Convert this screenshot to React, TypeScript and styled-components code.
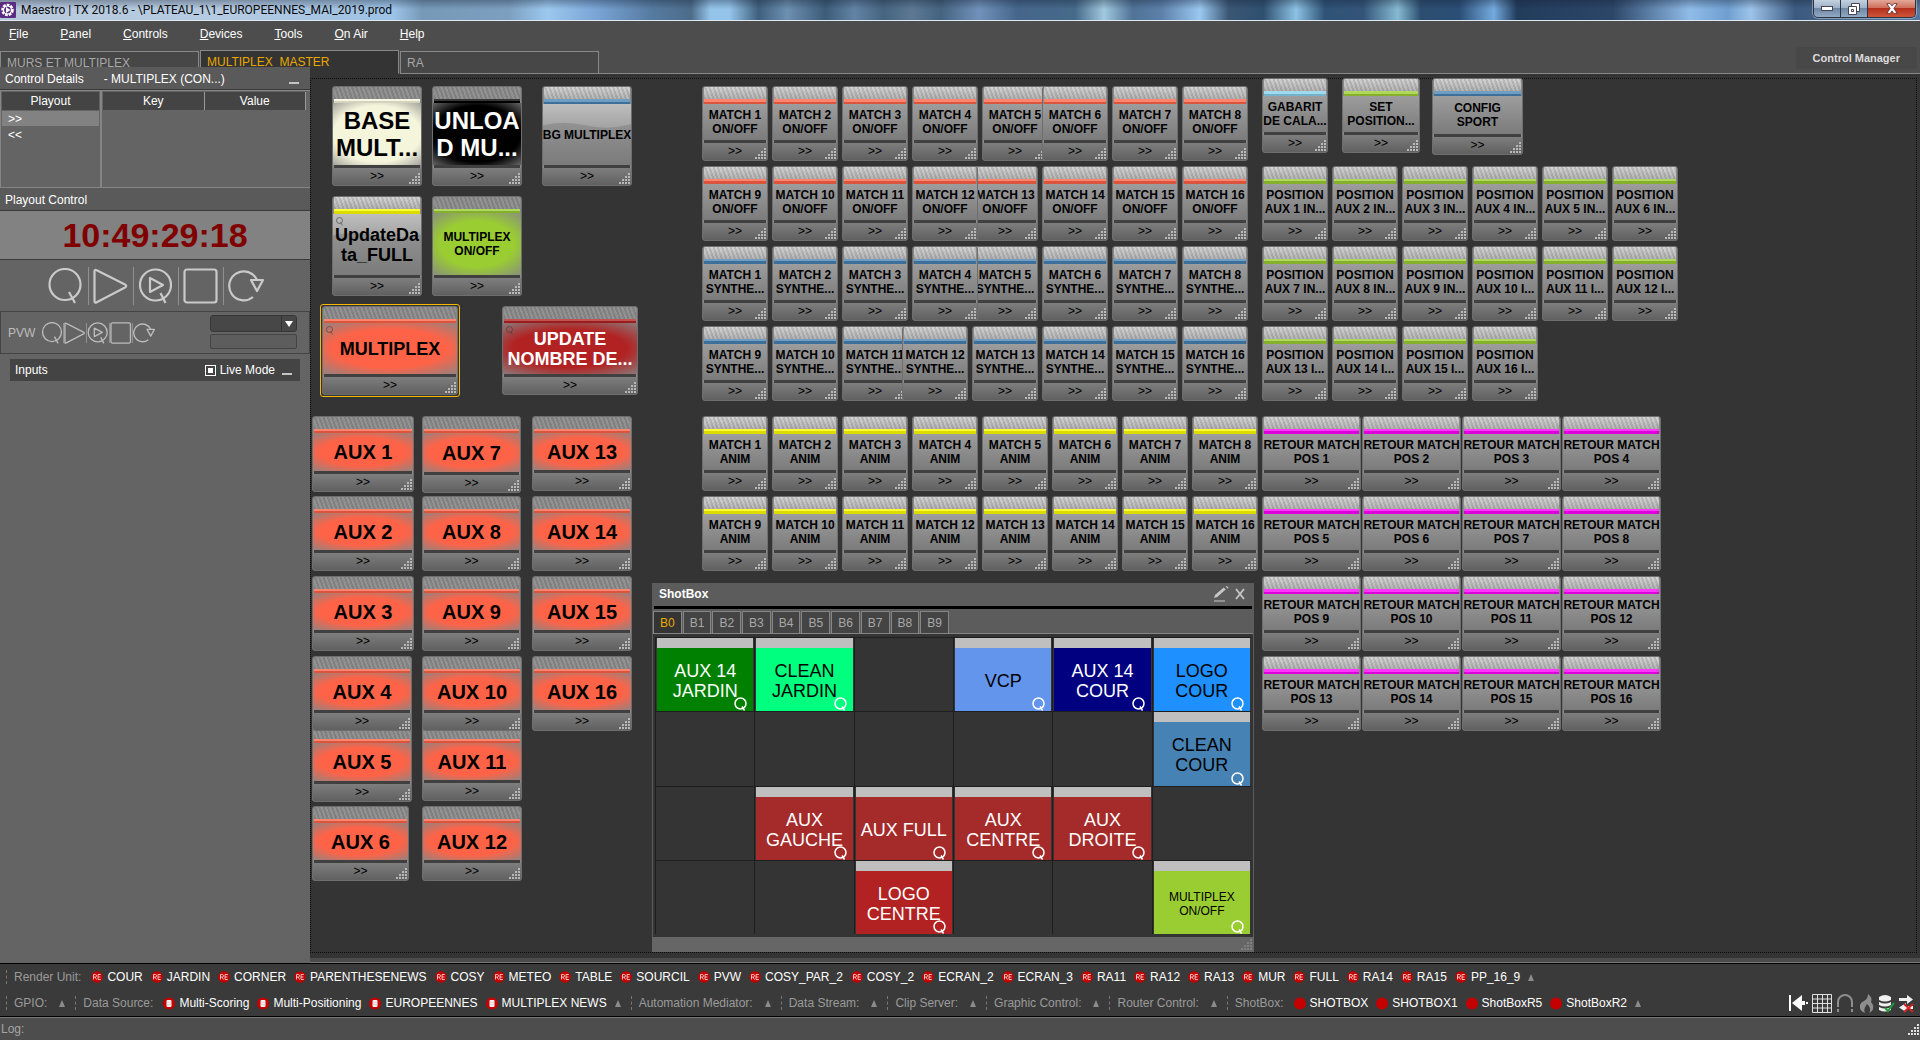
import React, { useState } from "react";
import styled, { createGlobalStyle } from "styled-components";

const GlobalStyle = createGlobalStyle`
  *, *::before, *::after { box-sizing: border-box; }
  html, body { margin: 0; padding: 0; background: #4d4d4d; }
  body, button, input, select, table {
    font-family: "Liberation Sans", Arial, sans-serif;
    font-size: 12px;
    line-height: 14px;
  }
  button { margin: 0; padding: 0; border: 0; background: none; color: inherit; cursor: pointer; }
`;

/* ---------- frame ---------- */

const Window = styled.div`
  display: flex;
  flex-direction: column;
  min-height: 100vh;
  background: #4d4d4d;
  color: #fff;
  overflow: hidden;
`;

const TitleBar = styled.header`
  display: flex;
  align-items: center;
  height: 21px;
  padding-right: 4px;
  border-bottom: 1px solid #dfe9f2;
  color: #0a0a0a;
  font: 12px/20px Roboto, "Open Sans", sans-serif;
  background:
    linear-gradient(to bottom, rgba(20, 30, 50, 0.35), rgba(255, 255, 255, 0) 45%),
    linear-gradient(to right,
      #b9c9dc 0, #b4cbe2 12%, #a3c3e2 18%, #9cc3e8 20.5%, #7799b8 22%, #7c9fbf 26.5%, #9cc8ee 28.5%,
      #7aa5d6 31%, #557a9f 34%, #4d6c8a 36%, #94c4ea 37%, #94c4ea 38%, #3f607d 39.5%, #6d8fb0 41%,
      #3c5c78 43%, #6383a5 44.5%, #45647f 46%, #5d7893 47.5%, #44637f 49%, #7191ba 51%, #45668a 53%,
      #466a8a 56%, #a0c8de 57.5%, #4f7296 59%, #5d80aa 60.5%, #9ac8f0 62.5%, #3a5674 64%, #2f5070 65.8%,
      #8cc2e4 67.5%, #2f5376 69%, #335478 71%, #86bad2 72.8%, #2c4e70 74%, #2b4e76 76%, #74aade 77.8%,
      #223c5c 79%, #2c4668 84%, #8fbbe8 88%, #6f9fd0 90%, #9dc3ea 91.2%, #3c5a80 93.5%, #56789e 100%);
`;

const AppTitle = styled.h1`
  flex: 1;
  margin: 0 0 0 5px;
  font: inherit;
`;

const CaptionButtons = styled.div`
  display: flex;
  align-self: flex-start;
  height: 18px;
  border: 1px solid #2a3443;
  border-top: 0;
  border-radius: 0 0 5px 5px;
  overflow: hidden;
  box-shadow: 0 0 0 1px rgba(255, 255, 255, 0.35);
`;

const CaptionButton = styled.button<{ $close?: boolean }>`
  display: flex;
  align-items: center;
  justify-content: center;
  width: ${(p) => (p.$close ? 47 : 27)}px;
  border-right: ${(p) => (p.$close ? "0" : "1px solid #2a3443")};
  background: ${(p) =>
    p.$close
      ? "linear-gradient(#e3a89a 0, #d06f5c 45%, #b5301c 50%, #d0543a 100%)"
      : "linear-gradient(#c3d0df 0, #9fb3c9 45%, #6f88a5 50%, #92a9c2 100%)"};
`;

const MenuBar = styled.nav`
  display: flex;
  align-items: center;
  gap: 32px;
  height: 26px;
  padding: 0 9px;
`;

const MenuButton = styled.button`
  color: #fff;
`;

const TabStrip = styled.div`
  display: flex;
  align-items: stretch;
  height: 27px;
`;

const Tabs = styled.div`
  display: flex;
  align-items: flex-end;
  gap: 1px;
`;

const Tab = styled.button<{ $active?: boolean }>`
  width: 199px;
  height: ${(p) => (p.$active ? 24 : 23)}px;
  padding: 0 6px;
  border: 1px solid #888;
  border-bottom-color: ${(p) => (p.$active ? "#343434" : "#888")};
  background: ${(p) => (p.$active ? "#343434" : "#474747")};
  color: ${(p) => (p.$active ? "#e9a800" : "#a8a8a8")};
  text-align: left;
`;

const StripRest = styled.div`
  flex: 1;
  display: flex;
  justify-content: flex-end;
  align-items: flex-start;
  padding-right: 3px;
  border-bottom: 1px solid #888;
`;

const ManagerButton = styled.button`
  height: 22px;
  padding: 0 17px;
  border-radius: 3px;
  background: #484848;
  color: #dcdcdc;
  font-size: 11px;
  font-weight: bold;
`;

const Main = styled.main`
  flex: 1;
  display: flex;
  background: #343434;
`;

/* ---------- sidebar ---------- */

/* The docked sidebar overlaps the lower edge of the tab strip. */
const Sidebar = styled.aside`
  position: relative;
  z-index: 2;
  flex: 0 0 310px;
  display: flex;
  flex-direction: column;
  margin-top: -7px;
  background: #646464;
`;

const PanelHeader = styled.h2`
  display: flex;
  align-items: center;
  gap: 20px;
  height: 23px;
  margin: 0;
  padding: 1px 11px 0 5px;
  border-bottom: 1px solid #3a3a3a;
  background: #5a5a5a;
  font: inherit;
`;

const MinimizeButton = styled.button`
  width: 10px;
  height: 10px;
  margin-left: auto;
  border-bottom: 2px solid #c4c4c4;
`;

const Details = styled.div`
  display: flex;
  height: 98px;
  border: 1px solid #858585;
  border-width: 1px 0 1px 1px;
`;

const DetailColumn = styled.div<{ $wide?: boolean }>`
  flex: ${(p) => (p.$wide ? "1" : "0 0 101px")};
  border-right: ${(p) => (p.$wide ? "0" : "2px solid #858585")};
`;

const DetailTable = styled.table<{ $wide?: boolean }>`
  width: 100%;
  border-collapse: separate;
  border-spacing: 0 1px;
  table-layout: fixed;
  padding: ${(p) => (p.$wide ? "0 4px 0 1px" : "0 1px")};
  th {
    height: 18px;
    padding: 0;
    background: #444;
    font-weight: normal;
    ${(p) => p.$wide && "border-right: 1px solid #999;"}
  }
  td { height: 15px; padding: 0 6px; }
`;

const PlayoutRow = styled.tr<{ $selected?: boolean }>`
  background: ${(p) => (p.$selected ? "#828282" : "transparent")};
`;

const Clock = styled.output`
  display: flex;
  align-items: center;
  justify-content: center;
  height: 49px;
  border-bottom: 1px solid #3a3a3a;
  background: #828282;
  color: #800000;
  font-size: 34px;
  line-height: 40px;
  font-weight: bold;
`;

const Transport = styled.div`
  display: flex;
  align-items: center;
  justify-content: center;
  height: 51px;
`;

const TransportButton = styled.button<{ $small?: boolean }>`
  display: flex;
  align-items: center;
  justify-content: center;
  width: ${(p) => (p.$small ? 23 : 45)}px;
  height: ${(p) => (p.$small ? 20 : 38)}px;
  & + & { border-left: 1px solid #909090; }
`;

const PreviewBox = styled.div`
  display: flex;
  align-items: flex-start;
  height: 43px;
  padding: 3px 12px 0 7px;
  border: 1px solid #444;
`;

const PreviewLabel = styled.span`
  width: 32px;
  padding-top: 11px;
  color: #bdbdbd;
`;

const PreviewButtons = styled.div`
  display: flex;
  padding-top: 8px;
`;

const PreviewFields = styled.div`
  display: flex;
  flex-direction: column;
  gap: 2px;
  width: 87px;
  margin-left: auto;
`;

const SelectWrap = styled.div`
  display: flex;
  align-items: center;
  position: relative;
  svg { position: absolute; right: 4px; pointer-events: none; }
`;

const Select = styled.select`
  appearance: none;
  width: 100%;
  height: 17px;
  border: 1px solid #363636;
  border-radius: 3px;
  background: linear-gradient(to right, #474747 70px, #333 70px, #333 71px, #474747 71px);
  color: #fff;
`;

const TextField = styled.input`
  width: 100%;
  height: 15px;
  border: 1px solid #444;
  border-radius: 2px;
  background: #5d5d5d;
  color: #fff;
`;

const InputsBar = styled.div`
  display: flex;
  align-items: center;
  height: 22px;
  margin: 5px 10px;
  padding: 0 8px 0 5px;
  background: #444;
`;

const InputsTitle = styled.h2`
  flex: 1;
  margin: 0;
  font: inherit;
`;

const CheckLabel = styled.label`
  display: flex;
  align-items: center;
  gap: 4px;
  margin-right: 7px;
`;

const CheckBox = styled.input`
  appearance: none;
  width: 11px;
  height: 11px;
  margin: 0;
  border: 1px solid #fff;
  &:checked { background: #fff; box-shadow: inset 0 0 0 2px #444; }
`;

/* ---------- control canvas ---------- */

const Stage = styled.section`
  flex: 1;
  display: flex;
  flex-direction: column;
  padding: 4px 3px 0 0;
`;

const Canvas = styled.div`
  position: relative;
  flex: 1;
  outline: 1px dotted #0c0c0c;
  outline-offset: -1px;
`;

const Splitter = styled.div`
  height: 5px;
  margin: 5px -3px 0 0;
  background: #4b4b4b;
`;

const TileBox = styled.article<{ $x: number; $y: number; $w: number; $h: number; $z: number }>`
  position: absolute;
  left: ${(p) => p.$x}px;
  top: ${(p) => p.$y}px;
  z-index: ${(p) => p.$z};
  display: flex;
  flex-direction: column;
  width: ${(p) => p.$w}px;
  height: ${(p) => p.$h}px;
  border: 1px solid #6e6e6e;
  border-radius: 3px;
  background: #8a8a8a;
  color: #000;
  overflow: hidden;
`;

const SelectionFrame = styled.div`
  position: absolute;
  left: 10px;
  top: 226px;
  width: 140px;
  height: 93px;
  border: 1px solid #f5b800;
  border-radius: 3px;
`;

const TileGrip = styled.div<{ $tinted: boolean }>`
  flex: 0 0 12px;
  margin: 0 1px;
  background:
    repeating-linear-gradient(70deg, rgba(0, 0, 0, 0.1) 0 2px, rgba(255, 255, 255, 0.04) 2px 4px),
    ${(p) => (p.$tinted ? "#8e8e8e" : "linear-gradient(#d2d2d2, #b0b0b0)")};
`;

const TileStripe = styled.div<{ $color: string; $thin: boolean }>`
  flex: 0 0 ${(p) => (p.$thin ? 4 : 5)}px;
  margin: 0 1px;
  background:
    linear-gradient(rgba(255, 255, 255, 0.22) 0 50%, rgba(0, 0, 0, 0.14) 50% 100%),
    ${(p) => p.$color};
`;

const TileLabel = styled.button<{ $fill?: string; $ink?: string; $size: number }>`
  flex: 1;
  position: relative;
  display: flex;
  align-items: center;
  justify-content: center;
  min-height: 0;
  color: ${(p) => p.$ink || "#000"};
  font-size: ${(p) => p.$size}px;
  line-height: ${(p) => (p.$size === 24 ? 27 : p.$size > 12 ? 20 : 14)}px;
  font-weight: bold;
  text-align: center;
  white-space: pre;
  background: ${(p) =>
    p.$fill
      ? p.$size === 24
        ? `radial-gradient(ellipse 82% 76% at center, ${p.$fill} 60%, #868686 100%)`
        : `radial-gradient(ellipse 84% 74% at center, ${p.$fill} 50%, #868686 96%)`
      : "linear-gradient(#9d9d9d, #7b7b7b)"};
`;

const LabelText = styled.span`
  position: relative;
`;

const Gloss = styled.svg`
  position: absolute;
  inset: 0;
  width: 100%;
  height: 100%;
`;

const CueMark = styled.svg`
  position: absolute;
  left: 3px;
  top: 3px;
`;

const TileRule = styled.div`
  flex: 0 0 3px;
  margin: 0 1px;
  background: #404040;
`;

const TilePlay = styled.button`
  flex: 0 0 17px;
  position: relative;
  padding-bottom: 2px;
  background: linear-gradient(#7e7e7e, #606060);
  color: #000;
  svg { position: absolute; right: 1px; bottom: 1px; }
`;

/* ---------- shotbox ---------- */

const ShotWindow = styled.section`
  position: absolute;
  z-index: 5;
  left: 342px;
  top: 505px;
  width: 602px;
  display: flex;
  flex-direction: column;
  background: #5c5c5c;
`;

const ShotTitle = styled.header`
  display: flex;
  align-items: center;
  gap: 6px;
  height: 23px;
  padding: 0 9px 1px 7px;
  font-weight: bold;
  h2 { flex: 1; margin: 0; font: inherit; }
  button { display: flex; }
`;

const ShotRule = styled.div`
  height: 3px;
  margin: 0 2px;
  background: #000;
`;

const ShotTabs = styled.div`
  display: flex;
  gap: 1px;
  margin: 2px 1px 0;
  border-bottom: 1px solid #858585;
`;

const ShotTab = styled.button<{ $active: boolean }>`
  height: 22px;
  padding: 0 6px;
  border: 1px solid #858585;
  border-bottom: 0;
  background: ${(p) => (p.$active ? "#343434" : "#444")};
  color: ${(p) => (p.$active ? "#e9a800" : "#a8a8a8")};
`;

const ShotGrid = styled.div`
  display: grid;
  grid-template-columns: repeat(6, 1fr);
  grid-template-rows: repeat(4, 1fr);
  height: 303px;
  margin: 0 1px;
  padding: 3px 2px;
  background: #343434;
`;

const ShotCell = styled.div`
  display: flex;
  padding: 0 1px;
  border: 1px solid #1e1e1e;
  border-width: 1px 0 0 1px;
`;

const Shot = styled.button<{ $fill: string; $ink: string; $small?: boolean }>`
  position: relative;
  flex: 1;
  padding-top: 3px;
  border-top: 10px solid #bfbfbf;
  background: ${(p) => p.$fill};
  color: ${(p) => p.$ink};
  font-size: ${(p) => (p.$small ? 12 : 18)}px;
  line-height: ${(p) => (p.$small ? 14 : 20)}px;
  white-space: pre;
  svg { position: absolute; right: 6px; bottom: 0; }
`;

const ShotFooter = styled.footer`
  display: flex;
  justify-content: flex-end;
  align-items: flex-end;
  height: 15px;
  padding: 2px;
  background: #666;
`;

/* ---------- status ---------- */

const StatusArea = styled.footer`
  display: flex;
  align-items: flex-end;
  border: 1px solid #000;
  border-width: 1px 0;
  outline: 1px solid #777;
  background: #3a3a3a;
`;

const StatusRows = styled.div`
  flex: 1;
`;

const StatusRow = styled.div`
  display: flex;
  align-items: center;
  height: 26px;
  padding-left: 6px;
  white-space: nowrap;
`;

const StatusGroup = styled.div`
  display: flex;
  align-items: center;
  margin-right: 10px;
  padding-left: 7px;
  border-left: 1px dashed #777;
`;

const StatusName = styled.span<{ $empty: boolean }>`
  margin-right: ${(p) => (p.$empty ? 12 : 10)}px;
  color: #9a9a9a;
`;

const StatusItem = styled.button`
  display: flex;
  align-items: center;
  gap: 4px;
  margin-right: 8px;
  color: #fff;
`;

const Expand = styled.button`
  display: flex;
`;

const Tools = styled.div`
  display: flex;
  align-items: center;
  gap: 3px;
  height: 26px;
  padding-right: 6px;
  button { display: flex; }
`;

const LogBar = styled.div`
  display: flex;
  justify-content: space-between;
  align-items: center;
  height: 23px;
  padding: 1px 1px 0 1px;
  color: #a4a4a4;
`;

/* ---------- drawings ---------- */

const Dots = ({ color = "#b8b8b8" }: { color?: string }) => (
  <svg width="11" height="11" viewBox="0 0 11 11" fill={color} aria-hidden="true">
    {[0, 1, 2, 3].flatMap((row) =>
      [0, 1, 2, 3]
        .filter((col) => col >= 3 - row)
        .map((col) => <rect key={`${row}-${col}`} x={col * 3} y={row * 3} width="2" height="2" />)
    )}
  </svg>
);

type GlyphName = "cue" | "play" | "cuePlay" | "stop" | "loop";
const glyphs: Record<GlyphName, React.ReactNode> = {
  cue: (<><circle cx="18" cy="16.5" r="15.5" /><path d="M22 24l6 11" /></>),
  play: <path d="M1.500 3.500Q1.500 1 3.700 2.200L32 16.500Q34.500 18 32 19.500L3.700 34.200Q1.500 35.500 1.500 33Z" />,
  cuePlay: (<><circle cx="17.500" cy="17" r="15.500" /><path d="M22.500 25l5 10" /><path d="M12 10v14l13-7z" /></>),
  stop: <rect x="1.500" y="1.500" width="32" height="33" rx="2.500" />,
  loop: (<><path d="M25 29A14.500 14.500 0 1 1 29 12" /><path d="M23 12h12l-6 11z" /></>),
};
const Glyph = ({ name, size }: { name: GlyphName; size: number }) => (
  <svg width={size} height={size} viewBox="0 0 36 36" fill="none" stroke={size > 24 ? "#cacaca" : "#bcbcbc"}
    strokeWidth="2.200" strokeLinejoin="round" aria-hidden="true">
    {glyphs[name]}
  </svg>
);
const transport: { name: GlyphName; title: string }[] = [
  { name: "cue", title: "Cue" },
  { name: "play", title: "Play" },
  { name: "cuePlay", title: "Cue and play" },
  { name: "stop", title: "Stop" },
  { name: "loop", title: "Continue" },
];

const Triangle = () => (
  <svg width="6" height="7" viewBox="0 0 6 7" fill="#8c8c8c" aria-hidden="true"><path d="M3 0L6 7H0z" /></svg>
);

const EngineIcon = () => (
  <svg width="12" height="12" viewBox="0 0 12 12" aria-hidden="true">
    <circle cx="6" cy="6" r="5.800" fill="#c40000" />
    <path d="M2.500 8.500v-5h1.700q1.300 0 1.300 1.300T4.200 6.100H2.500M4.200 6.100L5.500 8.500M9.800 3.500H7v5h2.800M7 6h2.500" fill="none" stroke="#f6d0d0" strokeWidth="0.900" />
  </svg>
);
const SourceIcon = () => (
  <svg width="12" height="13" viewBox="0 0 12 13" aria-hidden="true">
    <circle cx="6" cy="6.500" r="6" fill="#c80000" />
    <rect x="3.500" y="3" width="5" height="7" rx="1" fill="#f4f4f4" />
    <path d="M3.500 5.300h5M3.500 7.600h5" stroke="#d0a8a8" strokeWidth="0.500" />
  </svg>
);
const LampIcon = () => (
  <svg width="12" height="13" viewBox="0 0 12 13" aria-hidden="true"><circle cx="6" cy="6.500" r="6" fill="#c40000" /></svg>
);

/* ---------- data ---------- */

interface TileData {
  x: number; y: number; w: number; h?: number; z?: number;
  label: string; stripe: string; fill?: string; ink?: string; size?: number; cue?: boolean;
}

const TOMATO = "#ff6347";
const STEEL = "#4682b4";
const YELLOW = "#ffff00";
const GREEN = "#9acd32";
const MAGENTA = "#ff00ff";

const row = (xs: number[], y: number, w: number, stripe: string, label: (i: number) => string,
  under: number[] = []): TileData[] =>
  xs.map((x, i) => ({ x, y, w, stripe, label: label(i), z: under.includes(i) ? 1 : 2 }));

const matchX = [392, 462, 532, 602, 672, 732, 802, 872];
const matchXTight = [392, 462, 532, 602, 662, 732, 802, 872];
const matchXLast = [392, 462, 532, 592, 662, 732, 802, 872];
const animX = [392, 462, 532, 602, 672, 742, 812, 882];
const posX = [952, 1022, 1092, 1162, 1232, 1302];
const retourX = [952, 1052, 1152, 1252];

const aux = (n: number, x: number, y: number, w: number, h = 75, z = 2): TileData => ({
  x, y, w, h, z, label: `AUX ${n}`, stripe: TOMATO, fill: TOMATO, size: 20,
});

const tiles: TileData[] = [
  { x: 22, y: 8, w: 90, h: 100, label: "BASE\nMULT...", stripe: "#f5f5dc", fill: "#f5f5dc", size: 24 },
  { x: 122, y: 8, w: 90, h: 100, label: "UNLOA\nD MU...", stripe: "#000000", fill: "#000000", ink: "#fff", size: 24 },
  { x: 232, y: 8, w: 90, h: 100, label: "BG MULTIPLEX", stripe: STEEL },
  { x: 22, y: 118, w: 90, h: 100, label: "UpdateDa\nta_FULL", stripe: YELLOW, size: 18, cue: true },
  { x: 122, y: 118, w: 90, h: 100, label: "MULTIPLEX\nON/OFF", stripe: GREEN, fill: GREEN },
  { x: 12, y: 228, w: 136, h: 89, label: "MULTIPLEX", stripe: TOMATO, fill: TOMATO, size: 18, cue: true },
  { x: 192, y: 228, w: 136, h: 89, label: "UPDATE\nNOMBRE DE...", stripe: "#b22222", fill: "#b22222", ink: "#fff", size: 18, cue: true },

  aux(1, 2, 338, 102, 76), aux(2, 2, 418, 102), aux(3, 2, 498, 102), aux(4, 2, 578, 100), aux(5, 2, 648, 100, 76, 1), aux(6, 2, 728, 97),
  aux(7, 112, 338, 99, 77), aux(8, 112, 418, 99), aux(9, 112, 498, 99), aux(10, 112, 578, 100), aux(11, 112, 648, 100, 75, 1), aux(12, 112, 728, 100),
  aux(13, 222, 338, 100), aux(14, 222, 418, 100), aux(15, 222, 498, 100), aux(16, 222, 578, 100),

  ...row(matchX, 8, 66, TOMATO, (i) => `MATCH ${i + 1}\nON/OFF`, [4]),
  ...row(matchXTight, 88, 66, TOMATO, (i) => `MATCH ${i + 9}\nON/OFF`, [4]),
  ...row(matchXTight, 168, 66, STEEL, (i) => `MATCH ${i + 1}\nSYNTHE...`, [4]),
  ...row(matchXLast, 248, 66, STEEL, (i) => `MATCH ${i + 9}\nSYNTHE...`, [2]),
  ...row(animX, 338, 66, YELLOW, (i) => `MATCH ${i + 1}\nANIM`),
  ...row(animX, 418, 66, YELLOW, (i) => `MATCH ${i + 9}\nANIM`),

  { x: 952, y: 0, w: 66, label: "GABARIT\nDE CALA...", stripe: "#87ceeb" },
  { x: 1032, y: 0, w: 78, label: "SET\nPOSITION...", stripe: GREEN },
  { x: 1122, y: 0, w: 91, h: 77, label: "CONFIG\nSPORT", stripe: STEEL },
  ...row(posX, 88, 66, GREEN, (i) => `POSITION\nAUX ${i + 1} IN...`),
  ...row(posX, 168, 66, GREEN, (i) => `POSITION\nAUX ${i + 7} I${i + 7 < 10 ? "N" : ""}...`),
  ...row(posX.slice(0, 4), 248, 66, GREEN, (i) => `POSITION\nAUX ${i + 13} I...`),

  ...[0, 1, 2, 3].flatMap((r) =>
    row(retourX, 338 + r * 80, 99, MAGENTA, (i) => `RETOUR MATCH\nPOS ${r * 4 + i + 1}`)
  ),
];

interface ShotData { label: string; fill: string; ink: string; small?: boolean }
const none = null;
const brown = "#a52a2a";
const shots: (ShotData | null)[] = [
  { label: "AUX 14\nJARDIN", fill: "#008000", ink: "#fff" },
  { label: "CLEAN\nJARDIN", fill: "#00ff7f", ink: "#000" },
  none,
  { label: "VCP", fill: "#6495ed", ink: "#000" },
  { label: "AUX 14\nCOUR", fill: "#000080", ink: "#fff" },
  { label: "LOGO\nCOUR", fill: "#1e90ff", ink: "#000" },
  none, none, none, none, none,
  { label: "CLEAN\nCOUR", fill: "#4682b4", ink: "#000" },
  none,
  { label: "AUX\nGAUCHE", fill: brown, ink: "#fff" },
  { label: "AUX FULL", fill: brown, ink: "#fff" },
  { label: "AUX\nCENTRE", fill: brown, ink: "#fff" },
  { label: "AUX\nDROITE", fill: brown, ink: "#fff" },
  none, none, none,
  { label: "LOGO\nCENTRE", fill: "#b22222", ink: "#fff" },
  none, none,
  { label: "MULTIPLEX\nON/OFF", fill: GREEN, ink: "#000", small: true },
];

const engines = ["COUR", "JARDIN", "CORNER", "PARENTHESENEWS", "COSY", "METEO", "TABLE", "SOURCIL", "PVW",
  "COSY_PAR_2", "COSY_2", "ECRAN_2", "ECRAN_3", "RA11", "RA12", "RA13", "MUR", "FULL", "RA14", "RA15", "PP_16_9"];

interface GroupData { name: string; items?: string[]; icon?: React.ReactNode }
const groups: GroupData[] = [
  { name: "GPIO:" },
  { name: "Data Source:", icon: <SourceIcon />, items: ["Multi-Scoring", "Multi-Positioning", "EUROPEENNES", "MULTIPLEX NEWS"] },
  { name: "Automation Mediator:" },
  { name: "Data Stream:" },
  { name: "Clip Server:" },
  { name: "Graphic Control:" },
  { name: "Router Control:" },
  { name: "ShotBox:", icon: <LampIcon />, items: ["SHOTBOX", "SHOTBOX1", "ShotBoxR5", "ShotBoxR2"] },
];

/* ---------- components ---------- */

const Tile = ({ t }: { t: TileData }) => (
  <TileBox $x={t.x} $y={t.y} $w={t.w} $h={t.h ?? 75} $z={t.z ?? 2}>
    <TileGrip $tinted={!!t.fill} />
    <TileStripe $color={t.stripe} $thin={!!t.fill} />
    <TileLabel $fill={t.fill} $ink={t.ink} $size={t.size ?? 12}>
      {!t.fill && t.h === 100 && (
        <Gloss viewBox="0 0 88 60" preserveAspectRatio="none" aria-hidden="true">
          <linearGradient id="gloss" x1="0" y1="0" x2="0" y2="1">
            <stop offset="0" stopColor="#bebebe" />
            <stop offset=".4" stopColor="#a2a2a2" />
          </linearGradient>
          <linearGradient id="shade" x1="0" y1="0" x2="0" y2="1">
            <stop offset="0" stopColor="#929292" />
            <stop offset="1" stopColor="#7b7b7b" />
          </linearGradient>
          <rect width="88" height="60" fill="url(#gloss)" />
          <path d="M0 21Q20 16 42 21T88 20V60H0z" fill="url(#shade)" />
        </Gloss>
      )}
      {t.cue && (
        <CueMark width="8" height="9" viewBox="0 0 8 9" fill="none" stroke="rgba(60,60,60,0.6)" aria-hidden="true">
          <circle cx="3.500" cy="3.500" r="3" /><path d="M4.500 5.500l2 3" />
        </CueMark>
      )}
      <LabelText>{t.label}</LabelText>
    </TileLabel>
    <TileRule />
    <TilePlay>
      {">>"}
      <Dots />
    </TilePlay>
  </TileBox>
);

const StatusBlock = ({ group }: { group: GroupData }) => (
  <StatusGroup>
    <StatusName $empty={!group.items}>{group.name}</StatusName>
    {group.items?.map((item) => (
      <StatusItem key={item}>{group.icon}{item}</StatusItem>
    ))}
    <Expand aria-label={`Expand ${group.name}`}><Triangle /></Expand>
  </StatusGroup>
);

const ShotBox = () => {
  const [bank, setBank] = useState(0);
  return (
    <ShotWindow>
      <ShotTitle>
        <h2>ShotBox</h2>
        <button aria-label="Edit">
          <svg width="16" height="16" viewBox="0 0 16 16" fill="#c8c8c8" aria-hidden="true">
            <path d="M1 12l1.200-3.200 8.600-7.300 1.900 1.900-8.500 7.600zM12.600.6l1-.6 2 1.800-.8.900zM1 14.500h11v1H1z" />
          </svg>
        </button>
        <button aria-label="Close">
          <svg width="10" height="12" viewBox="0 0 10 12" stroke="#c8c8c8" strokeWidth="1.800" aria-hidden="true">
            <path d="M1 1l8 10M9 1L1 11" />
          </svg>
        </button>
      </ShotTitle>
      <ShotRule />
      <ShotTabs role="tablist">
        {Array.from({ length: 10 }, (_, i) => (
          <ShotTab key={i} role="tab" aria-selected={bank === i} $active={bank === i} onClick={() => setBank(i)}>
            {`B${i}`}
          </ShotTab>
        ))}
      </ShotTabs>
      <ShotGrid>
        {shots.map((s, i) => (
          <ShotCell key={i}>
            {s && (
              <Shot $fill={s.fill} $ink={s.ink} $small={s.small}>
                {s.label}
                <svg width="13" height="14" viewBox="0 0 13 14" fill="none" stroke="#fff" strokeWidth="1.500" aria-hidden="true">
                  <circle cx="6.500" cy="6.500" r="5.500" /><path d="M8 9.500l2.500 4" />
                </svg>
              </Shot>
            )}
          </ShotCell>
        ))}
      </ShotGrid>
      <ShotFooter><Dots color="#808080" /></ShotFooter>
    </ShotWindow>
  );
};

export default function App() {
  const [live, setLive] = useState(true);
  return (
    <Window>
      <GlobalStyle />
      <TitleBar>
        <svg width="16" height="16" viewBox="0 0 16 16" aria-hidden="true">
          <rect width="16" height="16" rx="1" fill="#5a2d82" />
          <circle cx="7.500" cy="8" r="5" fill="none" stroke="#fff" strokeWidth="2.600" strokeDasharray="2.600 1.100" />
          <circle cx="7.500" cy="8" r="4" fill="none" stroke="#fff" strokeWidth="1.200" />
          <path d="M6 5v6l4.500-3z" fill="#fff" />
        </svg>
        <AppTitle>Maestro | TX 2018.6 - \PLATEAU_1\1_EUROPEENNES_MAI_2019.prod</AppTitle>
        <CaptionButtons>
          <CaptionButton aria-label="Minimize">
            <svg width="12" height="5" viewBox="0 0 12 5" aria-hidden="true"><rect x=".5" y=".5" width="11" height="4" fill="#fff" stroke="#445" /></svg>
          </CaptionButton>
          <CaptionButton aria-label="Restore">
            <svg width="12" height="12" viewBox="0 0 12 12" fill="#fff" stroke="#445" aria-hidden="true">
              <path d="M3.500.5h8v8h-8z" /><path d="M.5 3.500h8v8h-8zM3.500 6.500v2h2v-2z" fillRule="evenodd" />
            </svg>
          </CaptionButton>
          <CaptionButton $close aria-label="Close">
            <svg width="12" height="11" viewBox="0 0 12 11" fill="#fff" stroke="#5a2a2a" strokeWidth=".8" aria-hidden="true">
              <path d="M.8.6h3.400L6 3 7.800.6h3.400L7.900 5.400l3.300 5H7.800L6 7.900l-1.800 2.500H.8l3.300-5z" />
            </svg>
          </CaptionButton>
        </CaptionButtons>
      </TitleBar>
      <MenuBar>
        {["File", "Panel", "Controls", "Devices", "Tools", "On Air", "Help"].map((m) => (
          <MenuButton key={m}><u>{m[0]}</u>{m.slice(1)}</MenuButton>
        ))}
      </MenuBar>
      <TabStrip>
        <Tabs role="tablist">
          <Tab role="tab">MURS ET MULTIPLEX</Tab>
          <Tab role="tab" $active aria-selected>MULTIPLEX_MASTER</Tab>
          <Tab role="tab">RA</Tab>
        </Tabs>
        <StripRest><ManagerButton>Control Manager</ManagerButton></StripRest>
      </TabStrip>

      <Main>
        <Sidebar>
          <PanelHeader>
            <span>Control Details</span>
            <span>- MULTIPLEX (CON...)</span>
            <MinimizeButton aria-label="Minimize control details" />
          </PanelHeader>
          <Details>
            <DetailColumn>
              <DetailTable>
                <thead><tr><th>Playout</th></tr></thead>
                <tbody>
                  <PlayoutRow $selected><td>{">>"}</td></PlayoutRow>
                  <PlayoutRow><td>{"<<"}</td></PlayoutRow>
                </tbody>
              </DetailTable>
            </DetailColumn>
            <DetailColumn $wide>
              <DetailTable $wide>
                <thead><tr><th>Key</th><th>Value</th></tr></thead>
              </DetailTable>
            </DetailColumn>
          </Details>
          <PanelHeader>Playout Control</PanelHeader>
          <Clock>10:49:29:18</Clock>
          <Transport>
            {transport.map((g) => (
              <TransportButton key={g.name} aria-label={g.title}><Glyph name={g.name} size={36} /></TransportButton>
            ))}
          </Transport>
          <PreviewBox>
            <PreviewLabel>PVW</PreviewLabel>
            <PreviewButtons>
              {transport.map((g) => (
                <TransportButton key={g.name} $small aria-label={`Preview ${g.title}`}><Glyph name={g.name} size={22} /></TransportButton>
              ))}
            </PreviewButtons>
            <PreviewFields>
              <SelectWrap>
                <Select aria-label="Preview channel" />
                <svg width="8" height="6" viewBox="0 0 8 6" fill="#fff" aria-hidden="true"><path d="M0 0h8L4 6z" /></svg>
              </SelectWrap>
              <TextField aria-label="Preview name" />
            </PreviewFields>
          </PreviewBox>
          <InputsBar>
            <InputsTitle>Inputs</InputsTitle>
            <CheckLabel>
              <CheckBox type="checkbox" checked={live} onChange={(e) => setLive(e.target.checked)} />
              Live Mode
            </CheckLabel>
            <MinimizeButton aria-label="Minimize inputs" />
          </InputsBar>
        </Sidebar>

        <Stage>
          <Canvas>
            <SelectionFrame />
            {tiles.map((t) => <Tile key={`${t.x}-${t.y}`} t={t} />)}
            <ShotBox />
          </Canvas>
          <Splitter />
        </Stage>
      </Main>

      <StatusArea>
        <StatusRows>
          <StatusRow>
            <StatusBlock group={{ name: "Render Unit:", items: engines, icon: <EngineIcon /> }} />
          </StatusRow>
          <StatusRow>
            {groups.map((g) => <StatusBlock key={g.name} group={g} />)}
          </StatusRow>
        </StatusRows>
        <Tools>
          <button aria-label="Rewind">
            <svg width="20" height="16" viewBox="0 0 20 16" fill="#fff" aria-hidden="true"><path d="M0 0h2v16H0zM3 8l10-8v16zM13 6h3v4h-3zM17 7h2v2h-2z" /></svg>
          </button>
          <button aria-label="Grid">
            <svg width="20" height="19" viewBox="0 0 20 19" fill="none" stroke="#e0e0e0" aria-hidden="true"><path d="M.5.500h19v18H.5zM5.500 0v19M10.500 0v19M15.500 0v19M0 5h20M0 9.500h20M0 14h20" /></svg>
          </button>
          <button aria-label="Snap">
            <svg width="20" height="19" viewBox="0 0 20 19" fill="none" stroke="#8e8e8e" strokeWidth="2" aria-hidden="true"><path d="M3 13V8a7 7 0 0 1 14 0v5M3 15v3M17 15v3" /></svg>
          </button>
          <button aria-label="Burn">
            <svg width="17" height="19" viewBox="0 0 17 19" fill="#8e8e8e" aria-hidden="true"><path d="M10 0q5 4 3 8 4 4 1 9l-3 2q3-5-2-9-4 5-2 9-6-2-5-8 1-3 4-4 4-2 4-7z" /></svg>
          </button>
          <button aria-label="Database">
            <svg width="17" height="19" viewBox="0 0 17 19" aria-hidden="true">
              <path d="M1 3q6-4 12 0v3q-6 3-12 0zM1 8q6 3 12 0v3q-6 3-12 0zM1 13q6 3 12 0v3q-6 3-12 0z" fill="#f0f0f0" />
              <path d="M7 14l3 3 6-8" fill="none" stroke="#1f9d3a" strokeWidth="2" />
            </svg>
          </button>
          <button aria-label="Connection">
            <svg width="16" height="19" viewBox="0 0 16 19" aria-hidden="true">
              <path d="M1 4h8V1l6 4.500L9 10V7H1zM15 12H8V9l-7 4.500L8 18v-3h7z" fill="#f0f0f0" />
              <path d="M6 10l9 8M15 10l-9 8" stroke="#d42020" strokeWidth="1.800" />
            </svg>
          </button>
        </Tools>
      </StatusArea>
      <LogBar>
        <span>Log:</span>
        <Dots color="#e0e0e0" />
      </LogBar>
    </Window>
  );
}
